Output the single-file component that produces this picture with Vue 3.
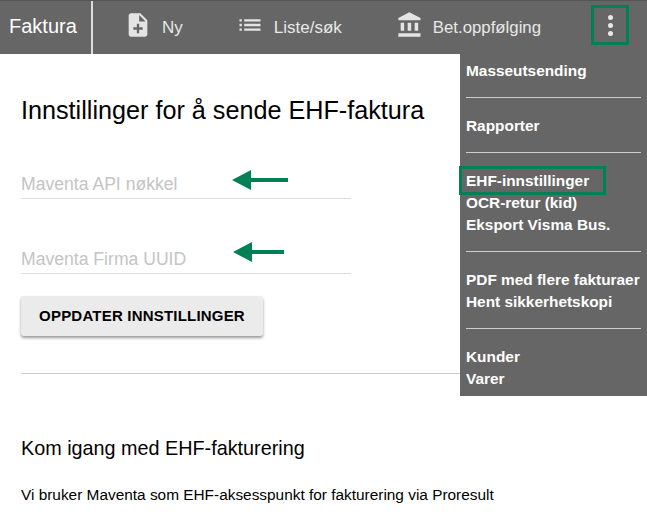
<template>
  <div class="page">
    <header class="topbar">
      <div class="brand">Faktura</div>
      <nav class="nav">
        <a class="nav-item nav-ny">
          <svg viewBox="0 0 24 24" width="28" height="28"><path fill="#e4e4e4" d="M14 2H6c-1.100 0-2 .9-2 2v16c0 1.100.9 2 2 2h12c1.100 0 2-.9 2-2V8l-6-6zm2 14h-3v3h-2v-3H8v-2h3v-3h2v3h3v2zm-3-7V3.500L18.500 9H13z"/></svg>
          <span>Ny</span>
        </a>
        <a class="nav-item nav-liste">
          <svg viewBox="0 0 24 24" width="28" height="28"><path fill="#e4e4e4" d="M3 13h2v-2H3v2zm0 4h2v-2H3v2zm0-8h2V7H3v2zm4 4h14v-2H7v2zm0 4h14v-2H7v2zM7 7v2h14V7H7z"/></svg>
          <span>Liste/søk</span>
        </a>
        <a class="nav-item nav-bet">
          <svg viewBox="0 0 24 24" width="28" height="28"><path fill="#e4e4e4" d="M4 10v7h3v-7H4zm6 0v7h3v-7h-3zM2 22h19v-3H2v3zm14-12v7h3v-7h-3zm-4.500-9L2 6v2h19V6l-9.500-5z"/></svg>
          <span>Bet.oppfølging</span>
        </a>
      </nav>
      <button class="more">
        <i></i><i></i><i></i>
      </button>
    </header>

    <main class="content">
      <h1>Innstillinger for å sende EHF-faktura</h1>
      <div class="field">
        <span class="placeholder">Maventa API nøkkel</span>
        <svg class="arrow arrow-a" width="56" height="20" viewBox="0 0 56 20"><path fill="#008055" d="M0 10 19 0v8h37v4H19v8z"/></svg>
      </div>
      <div class="field">
        <span class="placeholder">Maventa Firma UUID</span>
        <svg class="arrow arrow-b" width="51" height="20" viewBox="0 0 51 20"><path fill="#008055" d="M0 10 19 0v8h32v4H19v8z"/></svg>
      </div>
      <button class="update">OPPDATER INNSTILLINGER</button>
      <hr class="rule" />
      <h2>Kom igang med EHF-fakturering</h2>
      <p>Vi bruker Maventa som EHF-aksesspunkt for fakturering via Proresult</p>
    </main>

    <aside class="menu">
      <div class="group" v-for="(group, i) in menu" :key="i">
        <a v-for="item in group" :key="item" :class="{ marked: item === 'EHF-innstillinger' }">{{ item }}</a>
      </div>
    </aside>
  </div>
</template>

<script setup>
const menu = [
  ["Masseutsending"],
  ["Rapporter"],
  ["EHF-innstillinger", "OCR-retur (kid)", "Eksport Visma Bus."],
  ["PDF med flere fakturaer", "Hent sikkerhetskopi"],
  ["Kunder", "Varer"],
];
</script>

<style>
html, body {
  margin: 0;
  background: #fff;
  overflow: hidden;
}
</style>

<style scoped>
.page {
  position: relative;
  width: 647px;
  height: 517px;
  overflow: hidden;
  font-family: "Liberation Sans", Arial, sans-serif;
  color: #000;
}
.topbar {
  display: flex;
  align-items: stretch;
  height: 54px;
  background: #666;
  color: #e8e8e8;
  box-sizing: border-box;
  border-top: 1px solid #555;
}
.brand {
  width: 93px;
  box-sizing: border-box;
  padding-left: 9px;
  border-right: 2px solid #ddd;
  font-size: 20px;
  line-height: 50px;
  color: #fff;
}
.nav {
  display: flex;
  flex: 1;
  align-items: center;
}
.nav-item {
  display: flex;
  align-items: center;
  gap: 10px;
  font-size: 17px;
}
.nav-item svg {
  margin-bottom: 5px;
}
.nav-ny { margin-left: 31px; }
.nav-liste { margin-left: 53px; }
.nav-bet { margin-left: 54px; font-size: 16.800px; gap: 9px; }
.more {
  position: absolute;
  left: 591px;
  top: 5px;
  width: 38px;
  height: 40px;
  box-sizing: border-box;
  border: 3px solid #008055;
  background: none;
  padding: 0;
  display: flex;
  flex-direction: column;
  align-items: center;
  justify-content: center;
  gap: 3px;
}
.more i {
  width: 5px;
  height: 5px;
  border-radius: 50%;
  background: #e8e8e8;
}
.content {
  padding: 0 0 0 21px;
}
h1 {
  margin: 42px 0 0;
  font-size: 25.200px;
  line-height: 28px;
  font-weight: 400;
}
.field {
  position: relative;
  width: 330px;
  height: 40px;
  border-bottom: 1px solid #ddd;
  margin-top: 34px;
}
.placeholder {
  position: absolute;
  left: 0;
  bottom: 4px;
  font-size: 17.600px;
  line-height: 20px;
  color: #c4c4c4;
}
.arrow {
  position: absolute;
}
.arrow-a { left: 211px; top: 12px; }
.arrow-b { left: 212px; top: 9px; }
.update {
  display: block;
  width: 242px;
  height: 40px;
  margin-top: 22px;
  border: 0;
  border-radius: 3px;
  background: #ebebeb;
  box-shadow: 0 2px 3px rgba(0, 0, 0, 0.4);
  font-family: inherit;
  font-size: 15px;
  font-weight: 700;
  letter-spacing: 0.2px;
  color: #000;
  padding: 0 0 2px;
}
.rule {
  margin: 37px 0 0;
  border: 0;
  border-top: 1px solid #ccc;
}
h2 {
  margin: 63px 0 0;
  font-size: 19.800px;
  line-height: 22px;
  font-weight: 400;
}
p {
  margin: 27px 0 0;
  font-size: 15.400px;
  line-height: 18px;
}
.menu {
  position: absolute;
  left: 460px;
  top: 54px;
  width: 187px;
  height: 342px;
  box-sizing: border-box;
  padding: 0 6px 0;
  background: #666;
  color: #fff;
  font-size: 15.400px;
  font-weight: 700;
}
.group {
  display: flex;
  flex-direction: column;
  padding: 6px 0 15px;
  margin-bottom: 11px;
  border-bottom: 1px solid #ccc;
}
.group:last-child {
  border-bottom: 0;
  margin-bottom: 0;
  padding-bottom: 0;
}
.group a {
  line-height: 22px;
}
.marked {
  position: relative;
}
.marked::after {
  content: "";
  position: absolute;
  left: -7px;
  top: -4px;
  width: 147px;
  height: 29px;
  box-sizing: border-box;
  border: 3px solid #008055;
}
</style>
